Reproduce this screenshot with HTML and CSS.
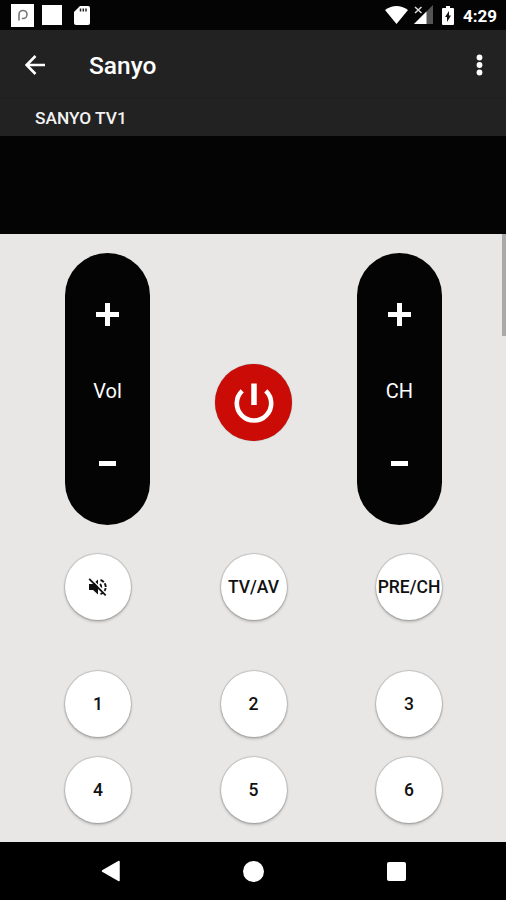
FILE: index.html
```html
<!DOCTYPE html>
<html lang="en">
<head>
    <meta charset="UTF-8">
    <meta name="viewport" content="width=device-width, initial-scale=1.0">
    <title>Sanyo Remote</title>
    <link rel="stylesheet" href="styles.css">
</head>
<body>
    <!-- Status bar -->
    <div class="status-bar">
        <svg class="icon-app" width="23" height="23" viewBox="0 0 23 23">
            <rect width="23" height="23" fill="#fff"/>
            <path d="M8 16.5V10.5a4 4 0 1 1 4 4h-1.2" fill="none" stroke="#777" stroke-width="1.6"/>
        </svg>
        <span class="icon-blank"></span>
        <svg class="icon-sd" width="16" height="19" viewBox="0 0 16 19">
            <path d="M6 0h8a2 2 0 0 1 2 2v15a2 2 0 0 1-2 2H2a2 2 0 0 1-2-2V6z" fill="#fff"/>
            <path d="M6.5 2.5v3M9.3 2.5v3M12 2.5v3" stroke="#222" stroke-width="1.5"/>
        </svg>
        <svg class="icon-wifi" width="23" height="18" viewBox="0 0 23 18">
            <path d="M0 4Q11.5-4 23 4L11.5 18z" fill="#fff"/>
        </svg>
        <svg class="icon-signal" width="20" height="20" viewBox="0 0 20 20">
            <path d="M19 0v19H0z" fill="#555"/>
            <path d="M12.5 6.500V19H0z" fill="#fff"/>
            <path d="M1 1l6.500 7M7.500 1L1 8" stroke="#040404" stroke-width="3.500"/>
            <path d="M1 2l6.500 6M7.500 2L1 8" stroke="#ddd" stroke-width="1.500"/>
        </svg>
        <svg class="icon-battery" width="12" height="19" viewBox="0 0 12 19">
            <path d="M4 0h4v2h3a1 1 0 0 1 1 1v15a1 1 0 0 1-1 1H1a1 1 0 0 1-1-1V3a1 1 0 0 1 1-1h3z" fill="#fff"/>
            <path d="M7 5v4.500h2L5 16v-5H3z" fill="#111"/>
        </svg>
        <span class="clock">4:29</span>
    </div>

    <header class="app-bar">
        <svg class="back" width="20" height="20" viewBox="0 0 20 20">
            <path d="M20 10H2M10.500 1L1.600 10l8.900 9" fill="none" stroke="#fff" stroke-width="2.600"/>
        </svg>
        <h1>Sanyo</h1>
        <svg class="menu" width="7" height="22" viewBox="0 0 7 22">
            <circle cx="3.500" cy="3.500" r="2.900" fill="#fff"/>
            <circle cx="3.500" cy="11" r="2.900" fill="#fff"/>
            <circle cx="3.500" cy="18.500" r="2.900" fill="#fff"/>
        </svg>
    </header>
    <div class="tab-bar">SANYO TV1</div>
    <div class="banner"></div>

    <!-- Remote control -->
    <main class="remote">
        <div class="scrollbar"></div>
        <div class="top-row">
            <div class="rocker">
                <span class="plus"></span>
                <span class="label">Vol</span>
                <span class="minus"></span>
            </div>
            <button class="power">
                <svg width="40" height="40" viewBox="0 0 40 40">
                    <path d="M8.200 7.800a17.200 17.200 0 1 0 23.600 0" fill="none" stroke="#fff" stroke-width="4.600"/>
                    <path d="M20 0.500v21.500" stroke="#fff" stroke-width="5.500"/>
                </svg>
            </button>
            <div class="rocker">
                <span class="plus"></span>
                <span class="label">CH</span>
                <span class="minus"></span>
            </div>
        </div>

        <div class="keys function-keys">
            <button class="key">
                <svg width="20" height="18" viewBox="0 0 20 18">
                    <path d="M1 6h4l5-4.500v15L5 12H1z" fill="#111"/>
                    <path d="M12 6a4 4 0 0 1 0 6M12.500 2a7.300 7.300 0 0 1 0 14" fill="none" stroke="#111" stroke-width="1.900" stroke-dasharray="4 1.200"/>
                    <path d="M2.500 0L19 16.500" stroke="#fff" stroke-width="1.500"/>
                    <path d="M1.200 0.800L17.700 17.300" stroke="#111" stroke-width="1.800"/>
                </svg>
            </button>
            <button class="key">TV/AV</button>
            <button class="key">PRE/CH</button>
        </div>

        <div class="keys number-keys">
            <button class="key">1</button>
            <button class="key">2</button>
            <button class="key">3</button>
            <button class="key">4</button>
            <button class="key">5</button>
            <button class="key">6</button>
        </div>
    </main>

    <nav class="nav-bar">
        <svg width="20" height="22" viewBox="0 0 20 22">
            <path d="M18 1.500v19L1.500 11z" fill="#fff" stroke="#fff" stroke-width="1.500" stroke-linejoin="round"/>
        </svg>
        <span class="home"></span>
        <span class="recent"></span>
    </nav>
</body>
</html>
```
FILE: styles.css
```css
:root {
    --black: #040404;
    --bar: #222222;
    --surface: #e8e7e6;
    --power: #cb0b06;
}

* {
    box-sizing: border-box;
}

body {
    margin: 0;
    height: 900px;
    display: flex;
    flex-direction: column;
    overflow: hidden;
    background: #000;
    color: #fff;
    font-family: Roboto, "Liberation Sans", sans-serif;
}

svg {
    display: block;
    flex: none;
}

button {
    font-family: inherit;
    padding: 0;
    border: none;
}

.status-bar {
    height: 30px;
    padding: 0 9px 0 11px;
    display: flex;
    align-items: center;
    background: var(--black);
}

.icon-blank {
    width: 20px;
    height: 20px;
    margin: 0 12px 0 8px;
    background: #fff;
}

.icon-wifi {
    margin-left: auto;
}

.icon-signal {
    margin: 0 8px 0 6px;
}

.clock {
    width: 34px;
    margin-left: 9px;
    font-size: 17px;
    font-weight: 700;
    line-height: 30px;
    padding-top: 1px;
}

.app-bar {
    height: 68px;
    padding: 1px 23px 0 25px;
    display: flex;
    align-items: center;
    background: var(--bar);
}

.app-bar h1 {
    margin: 2px auto 0 44px;
    font-size: 24.5px;
    font-weight: 500;
    line-height: 30px;
}

.tab-bar {
    height: 38px;
    padding-left: 35px;
    border-top: 1px solid #1e1e1e;
    background: var(--bar);
    font-size: 17.3px;
    font-weight: 500;
    line-height: 38px;
    color: #f2f2f2;
}

.banner {
    height: 98px;
    background: var(--black);
}

.remote {
    position: relative;
    height: 608px;
    padding: 19px 64px 0 65px;
    background: var(--surface);
}

.scrollbar {
    position: absolute;
    top: 0;
    right: 0;
    width: 4px;
    height: 102px;
    background: #aaa9a9;
}

.top-row {
    display: flex;
    justify-content: space-between;
    align-items: center;
}

.rocker {
    width: 85px;
    height: 272px;
    padding: 50px 0 59px;
    display: flex;
    flex-direction: column;
    align-items: center;
    justify-content: space-between;
    border-radius: 43px;
    background: var(--black);
}

.plus {
    width: 23px;
    height: 23px;
    background:
        linear-gradient(#fff, #fff) center / 23px 5px no-repeat,
        linear-gradient(#fff, #fff) center / 5px 23px no-repeat;
}

.rocker .label {
    font-size: 20px;
    line-height: 24px;
    padding-bottom: 6px;
}

.minus {
    width: 17px;
    height: 5px;
    background: #fff;
}

.power {
    width: 77px;
    height: 77px;
    margin-top: 27px;
    display: flex;
    align-items: center;
    justify-content: center;
    border-radius: 50%;
    background: var(--power);
    box-shadow: 0 0 1px rgba(0, 0, 0, 0.5);
}

.keys {
    display: grid;
    grid-template-columns: repeat(3, 66px);
    justify-content: space-between;
    row-gap: 20px;
}

.function-keys {
    margin-top: 29px;
}

.number-keys {
    margin-top: 51px;
}

.key {
    width: 66px;
    height: 66px;
    display: flex;
    align-items: center;
    justify-content: center;
    white-space: nowrap;
    border-radius: 50%;
    background: #fff;
    color: #111;
    font-size: 17.5px;
    font-weight: 500;
    box-shadow: 0 0 1px 1px rgba(0, 0, 0, 0.16), 0 2px 3px rgba(0, 0, 0, 0.2);
}

.nav-bar {
    height: 58px;
    padding: 0 100px 0 101px;
    display: flex;
    align-items: center;
    justify-content: space-between;
    background: #000;
}

.home {
    width: 21px;
    height: 21px;
    margin-right: 1px;
    border-radius: 50%;
    background: #fff;
}

.recent {
    width: 19px;
    height: 19px;
    border-radius: 2px;
    background: #fff;
}
```
